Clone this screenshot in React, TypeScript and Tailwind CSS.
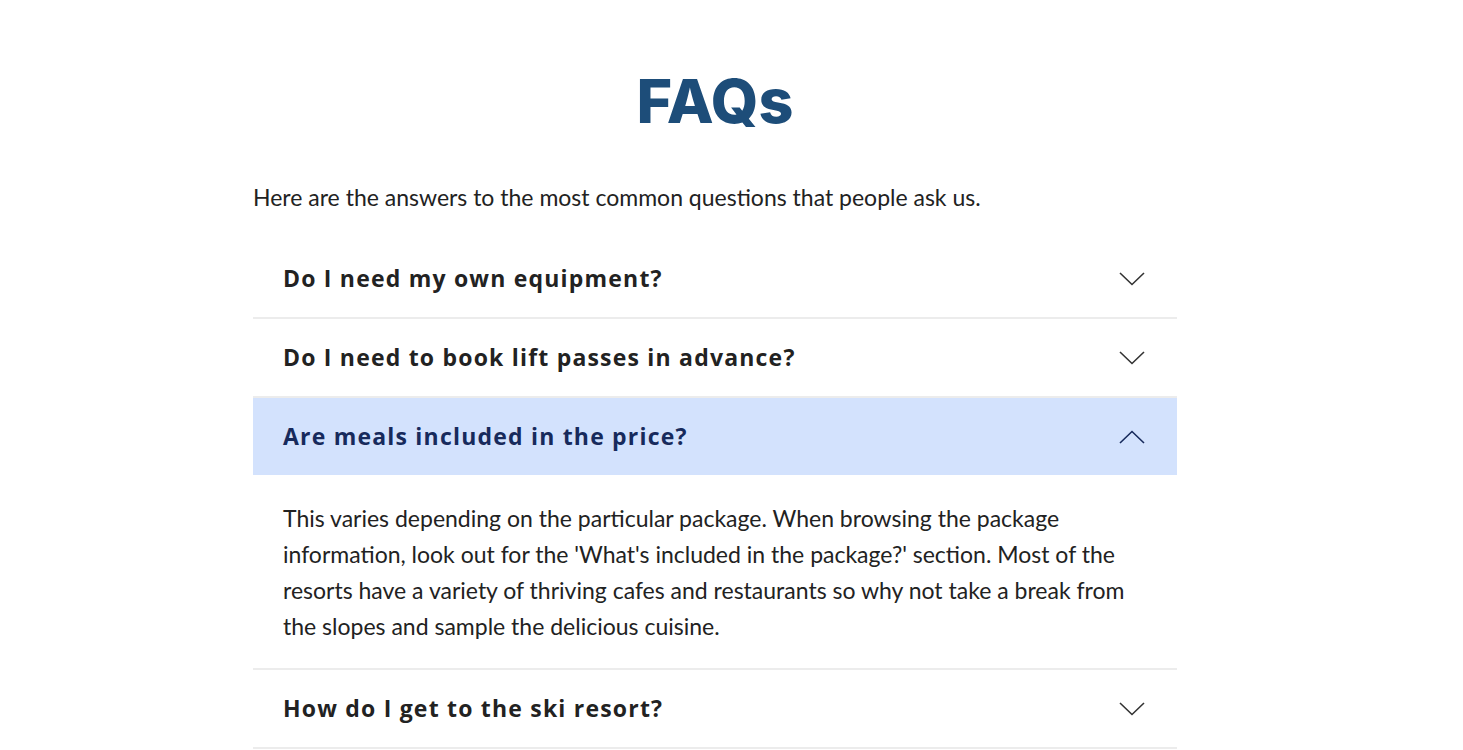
import React, { useState } from "react";

const faqs = [
  { q: "Do I need my own equipment?", a: "" },
  { q: "Do I need to book lift passes in advance?", a: "" },
  {
    q: "Are meals included in the price?",
    a: "This varies depending on the particular package. When browsing the package information, look out for the 'What's included in the package?' section. Most of the resorts have a variety of thriving cafes and restaurants so why not take a break from the slopes and sample the delicious cuisine.",
  },
  { q: "How do I get to the ski resort?", a: "" },
];

function Chevron({ up }: { up: boolean }) {
  return (
    <svg width="26" height="14" viewBox="0 0 26 14" fill="none" className="shrink-0">
      {up ? (
        <path d="M1 13 L13 1.5 L25 13" stroke="currentColor" strokeWidth="1.6" />
      ) : (
        <path d="M1 1 L13 12.5 L25 1" stroke="currentColor" strokeWidth="1.6" />
      )}
    </svg>
  );
}

export default function App() {
  const [open, setOpen] = useState<number>(2);
  return (
    <div className="min-h-[750px] bg-white pl-[253px] pt-[69px]" style={{ fontFamily: "Lato, 'Noto Sans', sans-serif" }}>
      <div className="w-[924px]">
        <h1
          className="text-center text-[61px] leading-[64px] font-extrabold text-[#1d4d79]"
          style={{ fontFamily: "Inter, 'Noto Sans', sans-serif" }}
        >
          FAQs
        </h1>
        <p className="mt-[48px] text-[23px] leading-[32px] text-[#222]">
          Here are the answers to the most common questions that people ask us.
        </p>
        <div className="mt-[27px]">
          {faqs.map((f, i) => {
            const isOpen = open === i;
            return (
              <div key={i} className="border-b-2 border-[#ececec]">
                <button
                  onClick={() => setOpen(isOpen ? -1 : i)}
                  className={`flex h-[77px] w-full items-center justify-between pl-[30px] pr-[32px] text-left ${
                    isOpen ? "bg-[#d3e2fd] text-[#172a5c]" : "bg-white text-[#222]"
                  }`}
                >
                  <span
                    className="text-[23px] font-bold tracking-[1.2px]"
                    style={{ fontFamily: "'Open Sans', 'Noto Sans', sans-serif" }}
                  >
                    {f.q}
                  </span>
                  <span className={isOpen ? "text-[#172a5c]" : "text-[#333]"}>
                    <Chevron up={isOpen} />
                  </span>
                </button>
                {isOpen && f.a && (
                  <div className="px-[30px] pt-[25px] pb-[24px] text-[23px] leading-[36px] text-[#222]">
                    {f.a}
                  </div>
                )}
              </div>
            );
          })}
        </div>
      </div>
    </div>
  );
}
